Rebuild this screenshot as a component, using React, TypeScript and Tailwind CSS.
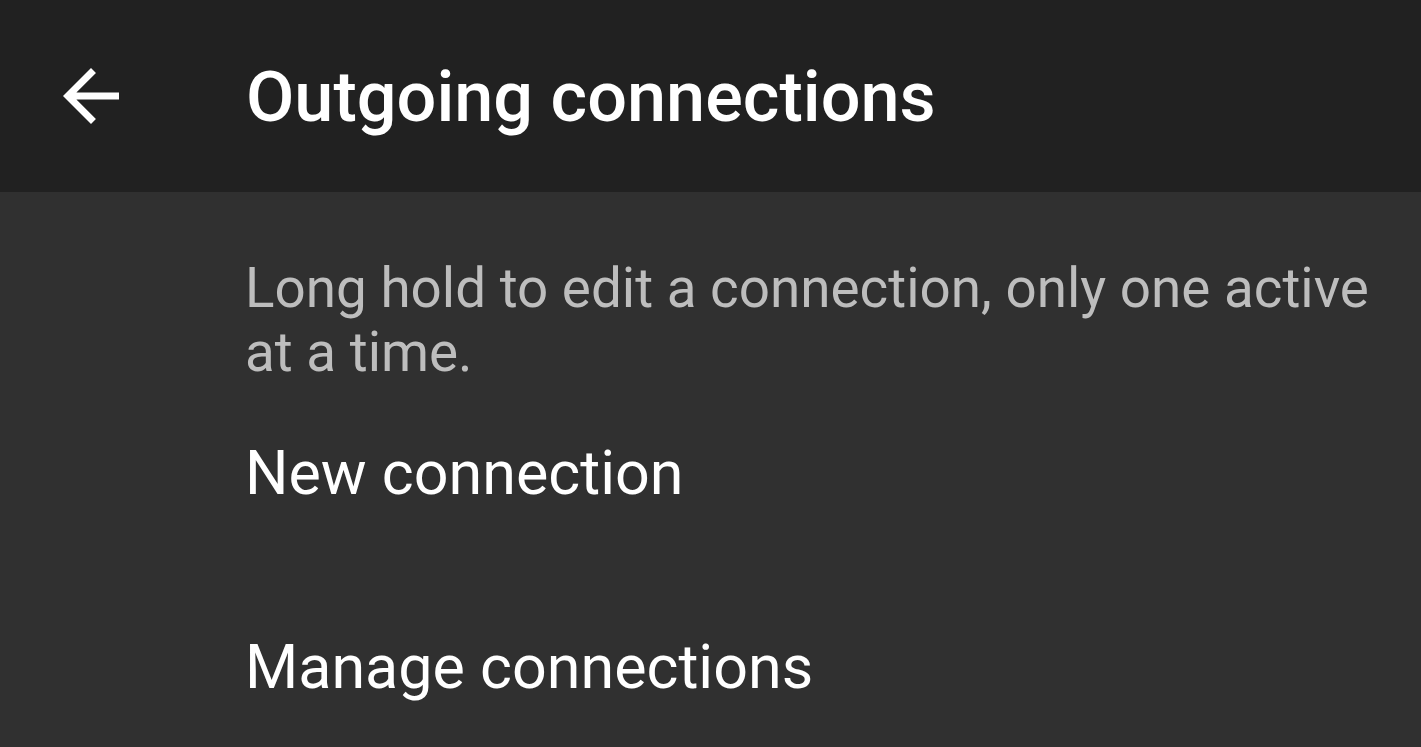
import React from "react";

function BackArrow() {
  return (
    <svg viewBox="0 0 24 24" className="w-[84px] h-[84px]" fill="#ffffff">
      <path d="M20 11H7.83l5.59-5.59L12 4l-8 8 8 8 1.41-1.41L7.83 13H20v-2z" />
    </svg>
  );
}

export default function App() {
  return (
    <div
      className="w-[1421px] h-[747px] overflow-hidden bg-[#303030] text-white"
      style={{ fontFamily: "Roboto, 'Noto Sans', sans-serif" }}
    >
      <header className="h-[192px] bg-[#212121] flex items-center">
        <div className="w-[246px] pl-[49px] flex items-center">
          <BackArrow />
        </div>
        <h1 className="text-[70.2px] leading-[70px] font-medium pt-[2px]">Outgoing connections</h1>
      </header>
      <main className="pl-[245px] pr-[40px]">
        <p className="mt-[64px] text-[54.8px] leading-[64px] text-[#bdbdbd] max-w-[1150px]">
          Long hold to edit a connection, only one active at a time.
        </p>
        <div className="mt-[54px] text-[61px] leading-[70px]">New connection</div>
        <div className="mt-[124px] text-[61px] leading-[70px]">Manage connections</div>
      </main>
    </div>
  );
}
